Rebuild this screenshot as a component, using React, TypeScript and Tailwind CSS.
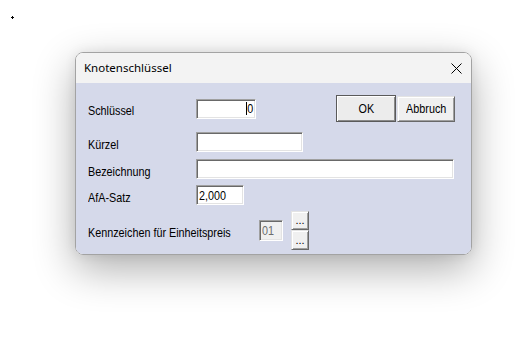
import React from "react";

const labelFont = {
  fontFamily: '"Liberation Sans", Arial, sans-serif',
};

const sunken =
  "bg-white border border-t-[#a0a0a0] border-l-[#a0a0a0] border-r-white border-b-white shadow-[inset_1px_1px_0_#696969,inset_-1px_-1px_0_#e3e3e3]";
const raised =
  "bg-[#f0f0f0] border border-t-[#e3e3e3] border-l-[#e3e3e3] border-r-[#696969] border-b-[#696969] shadow-[inset_1px_1px_0_#ffffff,inset_-1px_-1px_0_#a0a0a0]";

function Label({ children, w }: { children: React.ReactNode; w: string }) {
  return (
    <div className={`${w} mt-1 shrink-0`}>
      <div
        className="text-[13px] leading-[15px] text-black whitespace-nowrap scale-x-[0.83] origin-left"
        style={labelFont}
      >
        {children}
      </div>
    </div>
  );
}

function Narrow({ children, className = "" }: { children: React.ReactNode; className?: string }) {
  return (
    <span
      className={`inline-block text-[13px] leading-none whitespace-nowrap scale-x-[0.83] ${className}`}
      style={labelFont}
    >
      {children}
    </span>
  );
}

export default function App() {
  return (
    <div className="relative w-[530px] h-[346px] bg-white overflow-hidden pt-[52px] pl-[75px]">
      <svg className="absolute left-[11px] top-[16px]" width="3" height="3" viewBox="0 0 3 3">
        <rect x="1" y="0" width="1" height="3" fill="#000" />
        <rect x="0" y="1" width="3" height="1" fill="#000" />
      </svg>
      <div className="w-[397px] h-[203px] rounded-[8px] border border-[#a3a3a3] overflow-hidden flex flex-col shadow-[0_14px_42px_rgba(0,0,0,0.32),0_0_12px_rgba(0,0,0,0.08)]">
        <div className="h-[30px] shrink-0 bg-[#f3f3f3] flex items-center justify-between pl-[8px] pr-[9px]">
          <span
            className="text-[11.5px] text-black leading-none"
            style={{ fontFamily: '"Noto Sans", "Open Sans", sans-serif' }}
          >
            Knotenschlüssel
          </span>
          <svg width="11" height="11" viewBox="0 0 11 11">
            <path d="M0.5 0.5 L10.5 10.5 M10.5 0.5 L0.5 10.5" stroke="#000" strokeWidth="1" />
          </svg>
        </div>
        <div className="flex-1 bg-[#d5d9ea] pl-[12px] pt-[12px] flex flex-col">
          <div className="flex items-center h-[27px]">
            <Label w="w-[108px]">Schlüssel</Label>
            <div className={`${sunken} w-[60px] h-[20px] flex items-center justify-end pr-[2px]`}>
              <div className="w-px h-[13px] bg-black mr-[-1px]" />
              <Narrow className="text-black origin-right">0</Narrow>
            </div>
            <div className="ml-[80px] w-[60px] h-[27px] bg-[#ececec] border border-[#5a5a5a] shadow-[inset_1px_1px_0_#ffffff,inset_-1px_-1px_0_#8a8a8a] flex items-center justify-center text-black">
              <Narrow className="origin-center">OK</Narrow>
            </div>
            <div className={`${raised} ml-px w-[58px] h-[26px] flex items-center justify-center text-black`}>
              <Narrow className="origin-center">Abbruch</Narrow>
            </div>
          </div>
          <div className="flex items-center h-[20px] mt-[10px]">
            <Label w="w-[108px]">Kürzel</Label>
            <div className={`${sunken} w-[107px] h-[20px]`} />
          </div>
          <div className="flex items-center h-[20px] mt-[7px]">
            <Label w="w-[108px]">Bezeichnung</Label>
            <div className={`${sunken} w-[258px] h-[20px]`} />
          </div>
          <div className="flex items-center h-[20px] mt-[6px]">
            <Label w="w-[108px]">AfA-Satz</Label>
            <div className={`${sunken} w-[48px] h-[20px] flex items-center pl-[2px]`}>
              <Narrow className="text-black origin-left">2,000</Narrow>
            </div>
          </div>
          <div className="flex items-center h-[39px] mt-[6px]">
            <Label w="w-[171px]">Kennzeichen für Einheitspreis</Label>
            <div className="w-[24px] h-[21px] bg-[#f0f0f0] border border-t-[#a0a0a0] border-l-[#a0a0a0] border-r-white border-b-white shadow-[inset_1px_1px_0_#696969,inset_-1px_-1px_0_#e3e3e3] flex items-center pl-[2px]">
              <Narrow className="text-[#6d6d6d] origin-left">01</Narrow>
            </div>
            <div className="ml-[8px] flex flex-col w-[18px]">
              <div className={`${raised} h-[19px] flex items-end justify-center pb-[3px] text-black`}>
                <span className="text-[11px] leading-none" style={labelFont}>...</span>
              </div>
              <div className={`${raised} h-[20px] flex items-end justify-center pb-[3px] text-black`}>
                <span className="text-[11px] leading-none" style={labelFont}>...</span>
              </div>
            </div>
          </div>
        </div>
      </div>
    </div>
  );
}
